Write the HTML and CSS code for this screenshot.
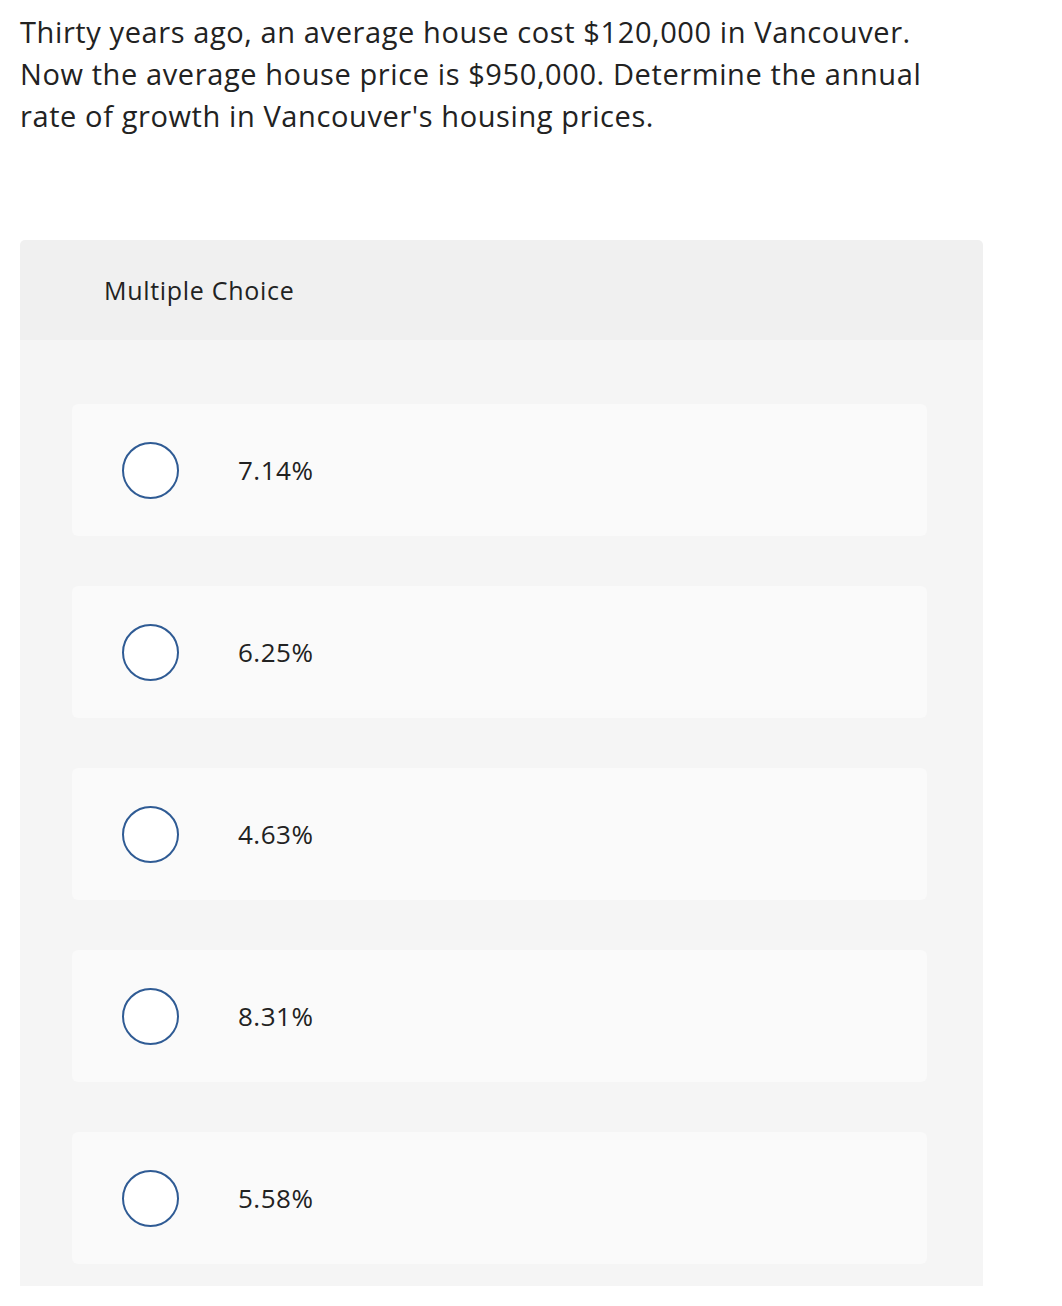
FILE: index.html
```html
<!DOCTYPE html>
<html>
<head>
<meta charset="utf-8">
<link rel="stylesheet" href="styles.css">
</head>
<body>
<div class="page">
  <p class="question">Thirty years ago, an average house cost $120,000 in Vancouver. Now the average house price is $950,000. Determine the annual rate of growth in Vancouver's housing prices.</p>
  <div class="panel">
    <div class="panel-head">Multiple Choice</div>
    <div class="panel-body">
      <div class="option"><span class="radio"></span><span class="label">7.14%</span></div>
      <div class="option"><span class="radio"></span><span class="label">6.25%</span></div>
      <div class="option"><span class="radio"></span><span class="label">4.63%</span></div>
      <div class="option"><span class="radio"></span><span class="label">8.31%</span></div>
      <div class="option"><span class="radio"></span><span class="label">5.58%</span></div>
    </div>
  </div>
</div>
</body>
</html>
```
FILE: styles.css
```css
* { box-sizing: border-box; }
html, body { margin: 0; padding: 0; background: #fff; }
body {
  font-family: "Open Sans", "Liberation Sans", sans-serif;
  color: #222;
}
.page {
  padding: 11px 60px 0 20px;
}
.question {
  margin: 0;
  font-size: 29px;
  letter-spacing: 0.6px;
  line-height: 42px;
  max-width: 945px;
}
.panel {
  margin-top: 103px;
  width: 963px;
}
.panel-head {
  height: 100px;
  background: #f0f0f0;
  border-radius: 5px 5px 0 0;
  padding-left: 84px;
  display: flex;
  align-items: center;
  font-size: 25px;
  letter-spacing: 0.7px;
}
.panel-body {
  background: #f5f5f5;
  padding: 64px 56px 22px 52px;
  display: flex;
  flex-direction: column;
  gap: 50px;
}
.option {
  height: 132px;
  background: #fafafa;
  border-radius: 6px;
  display: flex;
  align-items: center;
  padding-left: 50px;
}
.radio {
  width: 57px;
  height: 57px;
  border: 2px solid #2f5b94;
  border-radius: 50%;
  background: #fff;
  flex: none;
}
.label {
  margin-left: 59px;
  font-size: 26px;
  letter-spacing: 0.5px;
}
```
